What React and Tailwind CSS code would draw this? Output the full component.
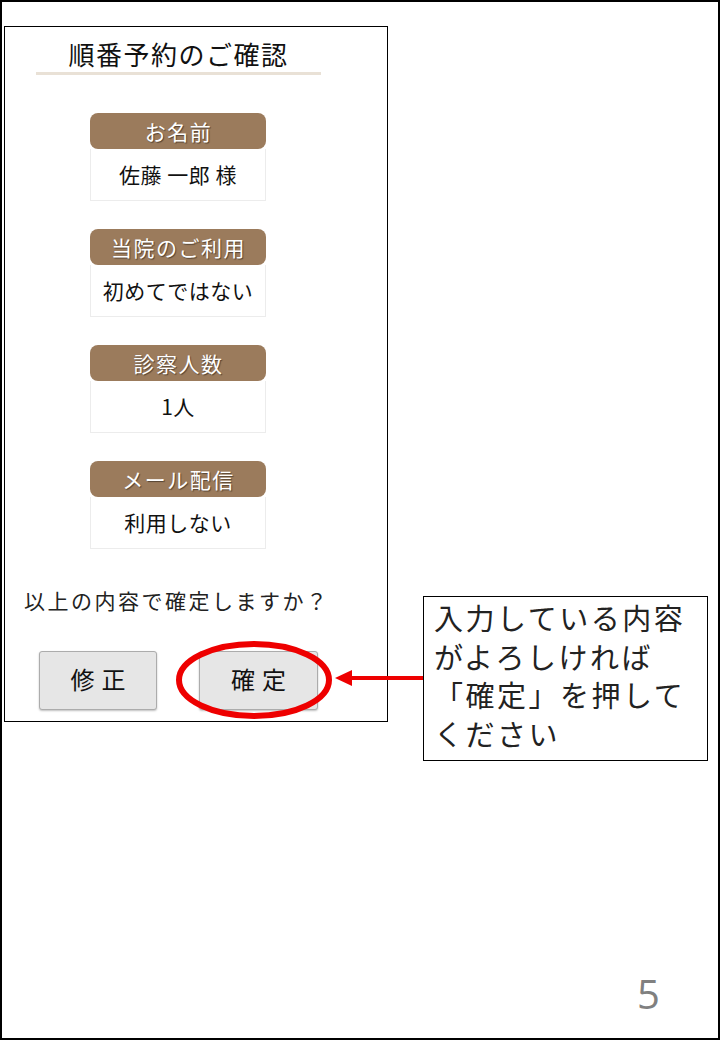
import React from "react";

const jp = "font-['Noto_Sans_CJK_JP','Noto_Sans',sans-serif]";

function Section({ label, value }) {
  return (
    <div className="flex flex-col w-[176px]">
      <div className="h-[36px] rounded-[8px] bg-[#9b7b5c] flex items-center justify-center text-white text-[21px] leading-none tracking-[1.5px] pl-[1px] [text-shadow:1px_1px_1px_rgba(0,0,0,0.45)]">
        {label}
      </div>
      <div className="h-[52px] border border-t-0 border-[#ececec] flex items-center justify-center text-[21px] leading-none tracking-[0.5px] text-[#111]">
        {value}
      </div>
    </div>
  );
}

export default function App() {
  return (
    <div className={`relative w-[720px] h-[1040px] border-2 border-black bg-white box-border ${jp}`}>
      <div className="ml-[2px] mt-[24px] w-[384px] h-[696px] border border-black flex flex-col">
        <div className="ml-[31px] mt-[10px] w-[285px] h-[33px] text-center text-[26px] leading-[33px] tracking-[1.5px] text-[#111]">
          順番予約のご確認
        </div>
        <div className="ml-[31px] mt-[2px] w-[285px] h-[3px] bg-[#e9e1d6]" />
        <div className="ml-[85px] mt-[38px] flex flex-col gap-[28px]">
          <Section label="お名前" value="佐藤 一郎 様" />
          <Section label="当院のご利用" value="初めてではない" />
          <Section label="診察人数" value="1人" />
          <Section label="メール配信" value="利用しない" />
        </div>
        <div className="ml-[19px] mt-[37px] h-[28px] text-[21px] leading-[28px] tracking-[2.5px] text-[#222]">
          以上の内容で確定しますか？
        </div>
        <div className="ml-[34px] mt-[37px] flex gap-[42px]">
          <div className="w-[118px] h-[59px] rounded-[3px] bg-[#e6e6e6] border border-[#acacac] shadow-[0_1px_2px_rgba(0,0,0,0.25)] flex items-center justify-center text-[24px] leading-none tracking-[7px] pl-[7px] pb-[3px] text-[#111]">
            修正
          </div>
          <div className="w-[119px] h-[59px] rounded-[3px] bg-[#e6e6e6] border border-[#acacac] shadow-[0_1px_2px_rgba(0,0,0,0.25)] flex items-center justify-center text-[24px] leading-none tracking-[7px] pl-[7px] pb-[3px] text-[#111]">
            確定
          </div>
        </div>
      </div>

      {/* red ellipse annotation */}
      <svg className="absolute left-[172px] top-[636px]" width="166" height="86" viewBox="0 0 166 86">
        <ellipse cx="80" cy="42" rx="75" ry="36" fill="none" stroke="#ee0000" strokeWidth="6" />
      </svg>

      {/* arrow */}
      <svg className="absolute left-[331px] top-[664px]" width="92" height="26" viewBox="0 0 92 26">
        <line x1="14" y1="12" x2="92" y2="12" stroke="#ee0000" strokeWidth="4" />
        <polygon points="2,12 19,4 19,20" fill="#ee0000" />
      </svg>

      {/* callout */}
      <div className="absolute left-[421px] top-[594px] w-[285px] h-[165px] border border-black bg-white pl-[10px] pt-[1px] text-[29px] leading-[38.5px] tracking-[2.5px] text-[#222]">
        <div>入力している内容</div>
        <div>がよろしければ</div>
        <div>「確定」を押して</div>
        <div>ください</div>
      </div>

      <div className="absolute left-[635px] top-[968px] text-[40px] leading-[48px] text-[#808080] font-['Open_Sans',sans-serif]">
        5
      </div>
    </div>
  );
}
